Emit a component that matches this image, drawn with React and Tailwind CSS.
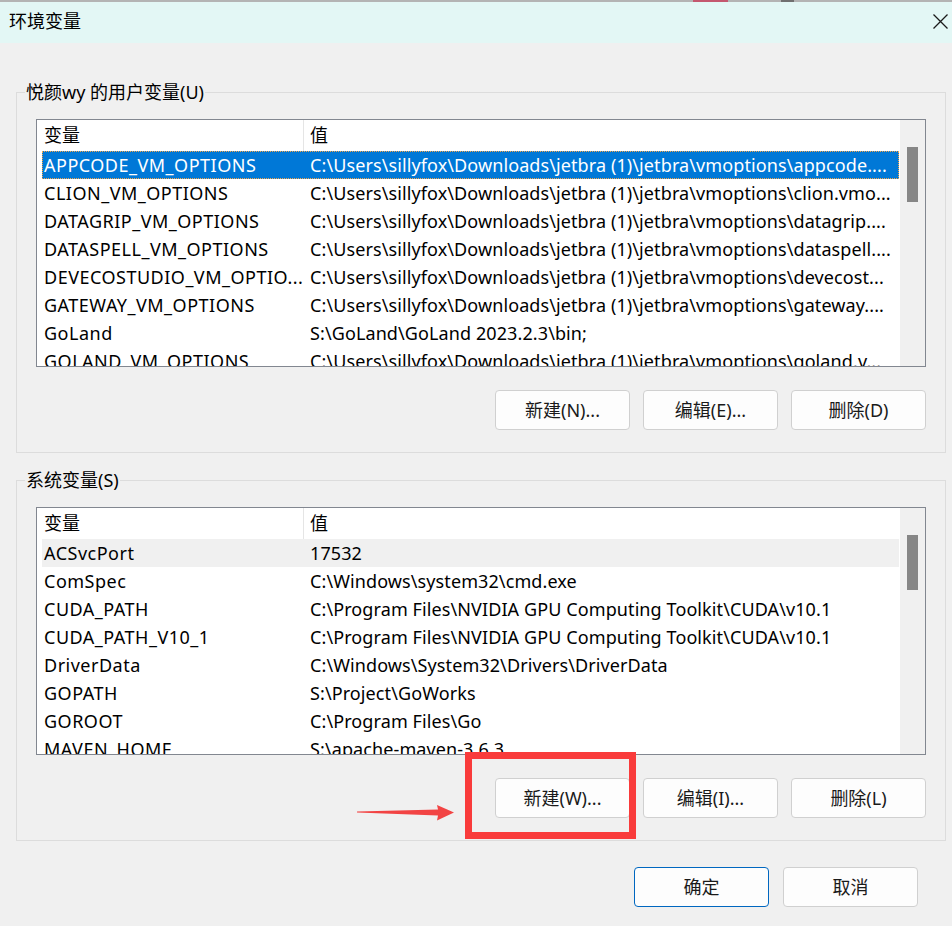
import React from "react";

const userRows = [
  ["APPCODE_VM_OPTIONS", "C:\\Users\\sillyfox\\Downloads\\jetbra (1)\\jetbra\\vmoptions\\appcode...."],
  ["CLION_VM_OPTIONS", "C:\\Users\\sillyfox\\Downloads\\jetbra (1)\\jetbra\\vmoptions\\clion.vmo..."],
  ["DATAGRIP_VM_OPTIONS", "C:\\Users\\sillyfox\\Downloads\\jetbra (1)\\jetbra\\vmoptions\\datagrip...."],
  ["DATASPELL_VM_OPTIONS", "C:\\Users\\sillyfox\\Downloads\\jetbra (1)\\jetbra\\vmoptions\\dataspell...."],
  ["DEVECOSTUDIO_VM_OPTIO...", "C:\\Users\\sillyfox\\Downloads\\jetbra (1)\\jetbra\\vmoptions\\devecost..."],
  ["GATEWAY_VM_OPTIONS", "C:\\Users\\sillyfox\\Downloads\\jetbra (1)\\jetbra\\vmoptions\\gateway...."],
  ["GoLand", "S:\\GoLand\\GoLand 2023.2.3\\bin;"],
  ["GOLAND_VM_OPTIONS", "C:\\Users\\sillyfox\\Downloads\\jetbra (1)\\jetbra\\vmoptions\\goland.v..."],
];

const sysRows = [
  ["ACSvcPort", "17532"],
  ["ComSpec", "C:\\Windows\\system32\\cmd.exe"],
  ["CUDA_PATH", "C:\\Program Files\\NVIDIA GPU Computing Toolkit\\CUDA\\v10.1"],
  ["CUDA_PATH_V10_1", "C:\\Program Files\\NVIDIA GPU Computing Toolkit\\CUDA\\v10.1"],
  ["DriverData", "C:\\Windows\\System32\\Drivers\\DriverData"],
  ["GOPATH", "S:\\Project\\GoWorks"],
  ["GOROOT", "C:\\Program Files\\Go"],
  ["MAVEN_HOME", "S:\\apache-maven-3.6.3"],
];

function ListView({ rows, mode }) {
  return (
    <div className="h-[248px] border border-[#828790] bg-white flex overflow-hidden">
      <div className="w-[862px] flex flex-col overflow-hidden">
        <div className="h-[31px] shrink-0 flex items-center">
          <div className="w-[267px] h-full flex items-center pl-[7px] border-r border-[#e5e5e5]">变量</div>
          <div className="flex-1 h-full flex items-center pl-[6px]">值</div>
        </div>
        {rows.map(([k, v], i) => {
          let cls = "ml-[5px] h-[28px] shrink-0 flex items-center whitespace-nowrap";
          if (i === 0 && mode === "selected")
            cls += " bg-[#0078d7] text-white outline outline-1 outline-dotted outline-[#f3a54b] -outline-offset-1";
          if (i === 0 && mode === "hover") cls += " bg-[#f0f0f0]";
          return (
            <div key={k} className={cls}>
              <div className="w-[261px] pl-[2px] overflow-hidden tracking-[0.5px]">{k}</div>
              <div className="flex-1 pl-[7px] overflow-hidden tracking-[0.1px]">{v}</div>
            </div>
          );
        })}
      </div>
      <div className="w-[1px] bg-white" />
      <div className="flex-1 bg-[#f0f0f0] pt-[27px] pl-[7px]">
        <div className="w-[11px] h-[55px] bg-[#868686]" />
      </div>
    </div>
  );
}

function Btn({ children, primary }) {
  return (
    <button
      className={
        "w-[135px] h-[40px] rounded-[4px] bg-[#fdfdfd] flex items-center justify-center text-[18px] text-[#1a1a1a] border " +
        (primary ? "border-[#0067c0]" : "border-[#d0d0d0]")
      }
    >
      {children}
    </button>
  );
}

function Group({ title, rows, mode, buttons, className }) {
  return (
    <fieldset className={"ml-[16px] w-[930px] border border-[#dcdcdc] px-[19px] pb-[22px] " + className}>
      <legend className="-ml-[11px] px-[1px] leading-[26px] text-[18px]">{title}</legend>
      <div className="mt-[14px]">
        <ListView rows={rows} mode={mode} />
      </div>
      <div className="mt-[23px] flex justify-end gap-[13px]">
        {buttons.map((b) => (
          <Btn key={b}>{b}</Btn>
        ))}
      </div>
    </fieldset>
  );
}

export default function App() {
  return (
    <div className="relative w-[952px] h-[926px] overflow-hidden bg-[#f0f0f0] text-[18px] text-black font-['Noto_Sans','Noto_Sans_CJK_SC',sans-serif]">
      <div className="h-[2px] flex bg-[#b4b4b4]">
        <div className="w-[693px]" />
        <div className="w-[35px] bg-[#c4586f]" />
        <div className="w-[53px]" />
        <div className="w-[13px] bg-[#707070]" />
      </div>
      <div className="h-[41px] bg-[#e3f7f5] flex items-center justify-between pl-[9px] pr-[4px]">
        <span className="text-[18px] leading-none pb-[3px]">环境变量</span>
        <svg width="15" height="15" viewBox="0 0 15 15" className="mb-[2px]">
          <path d="M0.5 0.5 L14.5 14.5 M14.5 0.5 L0.5 14.5" stroke="#1a1a1a" strokeWidth="1.3" fill="none" />
        </svg>
      </div>

      <Group
        className="mt-[36px]"
        title="悦颜wy 的用户变量(U)"
        rows={userRows}
        mode="selected"
        buttons={["新建(N)...", "编辑(E)...", "删除(D)"]}
      />
      <Group
        className="mt-[14px]"
        title="系统变量(S)"
        rows={sysRows}
        mode="hover"
        buttons={["新建(W)...", "编辑(I)...", "删除(L)"]}
      />

      <div className="mt-[26px] flex justify-end gap-[14px] pr-[34px]">
        <Btn primary>确定</Btn>
        <Btn>取消</Btn>
      </div>

      {/* annotation overlays */}
      <div className="absolute left-[465px] top-[752px] w-[171px] h-[87px] border-[7px] border-[#f93b3b]" />
      <svg className="absolute left-[350px] top-[800px]" width="110" height="25" viewBox="350 800 110 25">
        <polygon
          points="357,811.6 438,809.5 437,805 454,812.5 437,820.5 438,815.5 357,812.6"
          fill="#f24444"
        />
      </svg>
    </div>
  );
}
